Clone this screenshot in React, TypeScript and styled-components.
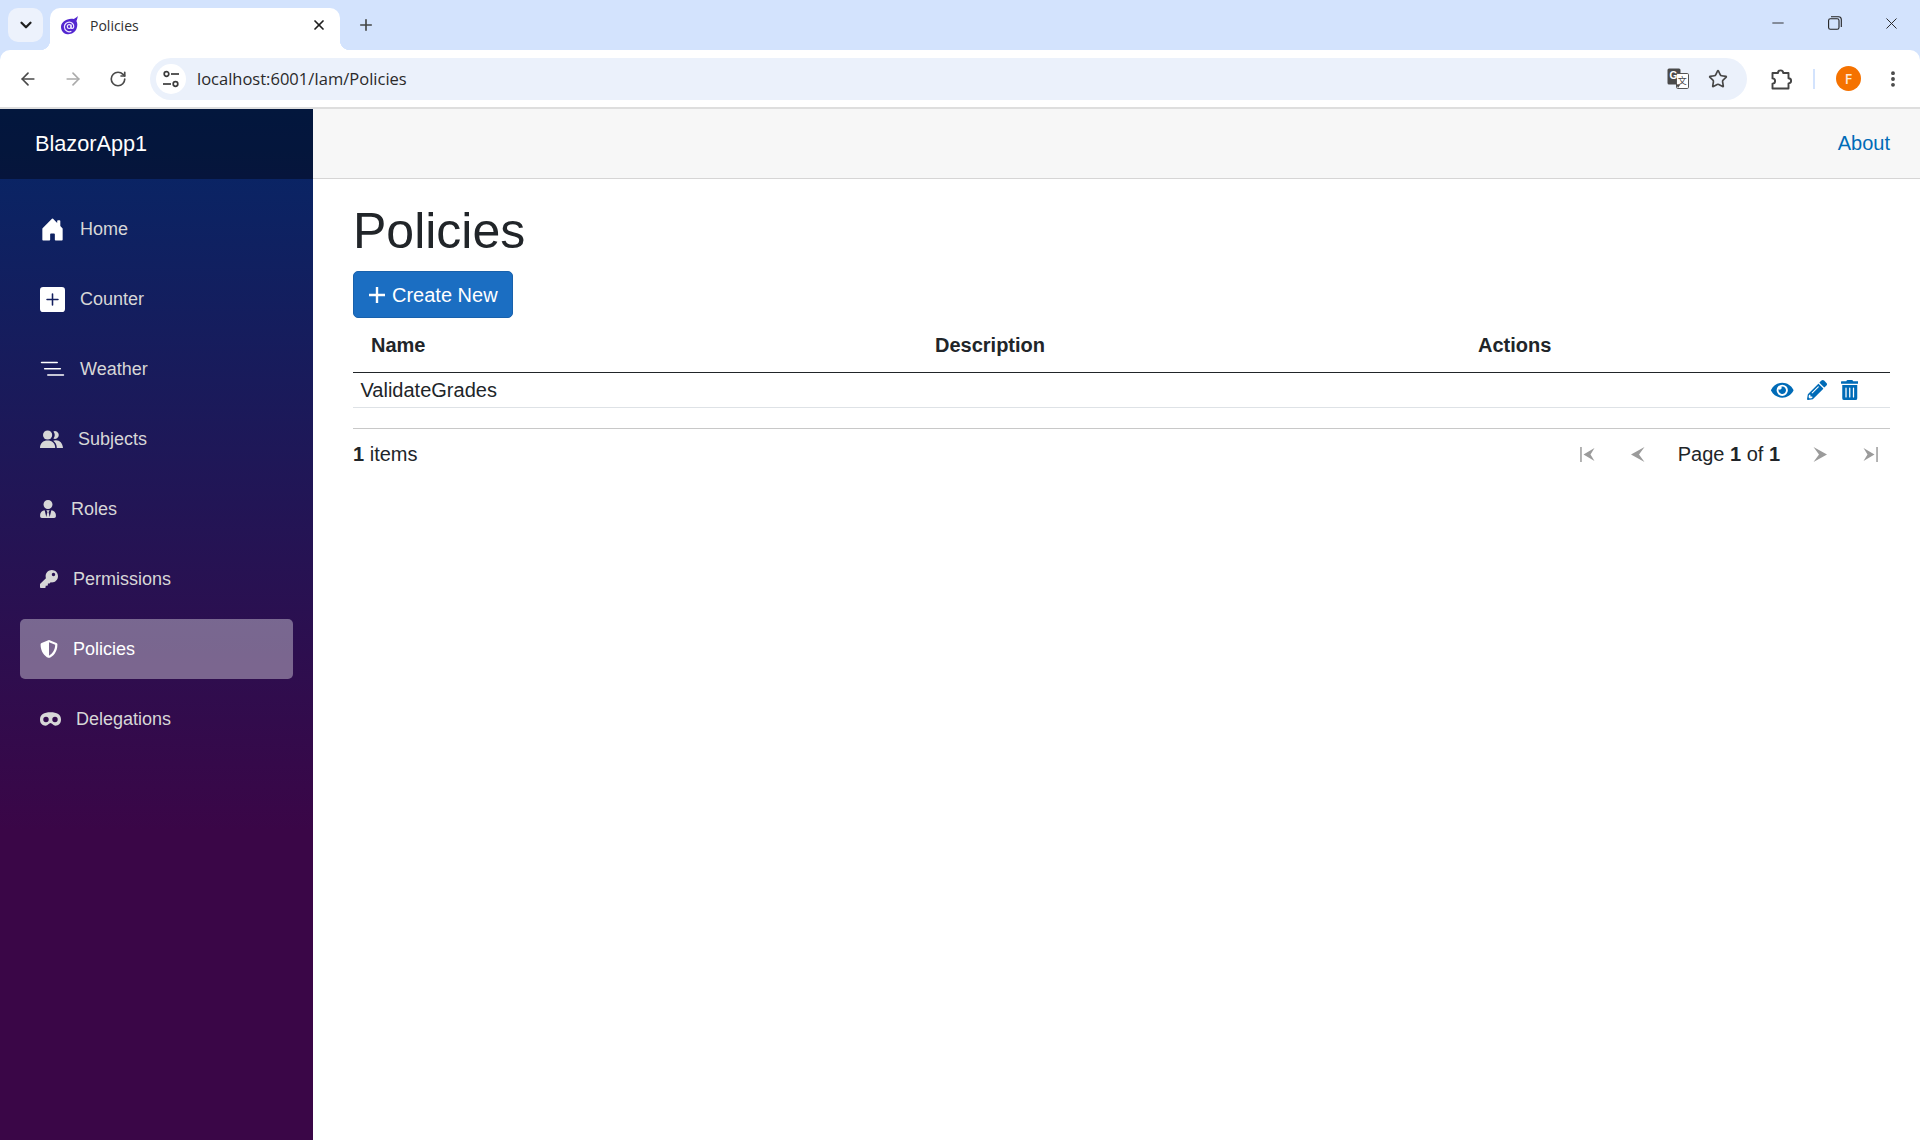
import React from 'react';
import styled, {createGlobalStyle} from 'styled-components';
import {ArrowLeft, ArrowRight, ChevronDown, EllipsisVertical, Minus, Plus, RotateCw, Star, X} from 'lucide-react';
import {BsHouseDoorFill, BsListNested, BsPlusSquareFill} from 'react-icons/bs';
import {FaEye, FaKey, FaPencilAlt, FaShieldAlt, FaTrashAlt, FaUserTie} from 'react-icons/fa';

const GlobalStyle = createGlobalStyle`
html, body {
    margin: 0;
    padding: 0;
    background: white;
    font-family: "Liberation Sans", Arial, sans-serif;
}
* {
    box-sizing: border-box;
}
`;

const Page = styled.div`
width: 1920px;
height: 1140px;
display: flex;
flex-direction: column;
overflow: hidden;
`;

/* browser frame */

const BrowserFrame = styled.div`
flex: none;
background-color: #d3e3fd;
`;

const TabStrip = styled.div`
height: 50px;
display: flex;
align-items: flex-start;
padding: 8px 0 0 8px;
`;

const TabListButton = styled.div`
width: 35px;
height: 34px;
margin-right: 7px;
border-radius: 10px;
background-color: #edf2fc;
color: #1f1f1f;
display: flex;
align-items: center;
justify-content: center;
`;

const Tab = styled.div`
position: relative;
width: 290px;
height: 42px;
padding: 0 13px 8px 10px;
background-color: white;
border-radius: 10px 10px 0 0;
display: flex;
align-items: center;
color: #1f1f1f;

&::before, &::after {
    content: '';
    position: absolute;
    bottom: 0;
    width: 10px;
    height: 10px;
}
&::before {
    left: -10px;
    background: radial-gradient(circle at 0 0, transparent 10px, white 10.5px);
}
&::after {
    right: -10px;
    background: radial-gradient(circle at 100% 0, transparent 10px, white 10.5px);
}
`;

const TabTitle = styled.span`
flex: 1;
margin-left: 11px;
font-family: "Open Sans", sans-serif;
font-size: 14px;
color: #303030;
`;

const NewTab = styled.div`
margin-left: 17px;
height: 34px;
color: #444746;
display: flex;
align-items: center;
`;

const WindowControls = styled.div`
margin-left: auto;
height: 30px;
display: flex;
align-items: center;
color: #222;
`;

const WindowButton = styled.div`
width: 57px;
display: flex;
justify-content: center;
`;

const Toolbar = styled.div`
height: 59px;
background-color: white;
border-bottom: 2px solid #dedede;
border-radius: 10px 10px 0 0;
display: flex;
align-items: center;
padding-left: 5px;
`;

const ToolbarButton = styled.div<{$dim?: boolean}>`
width: 45px;
display: flex;
justify-content: center;
color: ${(props) => props.$dim ? '#ababab' : '#4a4a4a'};
`;

const Omnibox = styled.div`
flex: 1;
height: 42px;
margin-left: 10px;
padding: 0 19px 0 6px;
border-radius: 21px;
background-color: #ebf1fb;
display: flex;
align-items: center;
`;

const SiteInfo = styled.div`
width: 30px;
height: 30px;
border-radius: 50%;
background-color: white;
display: flex;
align-items: center;
justify-content: center;
`;

const Url = styled.span`
flex: 1;
margin-left: 11px;
font-family: "Open Sans", sans-serif;
font-size: 16.5px;
color: #2a2a2a;
`;

const OmniIcons = styled.div`
display: flex;
align-items: center;
gap: 19px;
color: #474747;
`;

const ToolbarEnd = styled.div`
width: 173px;
padding-left: 24px;
display: flex;
align-items: center;
color: #444;
`;

const Divider = styled.div`
width: 2px;
height: 20px;
margin: 0 21px;
background-color: #d3e3fd;
`;

const Avatar = styled.div`
width: 25px;
height: 25px;
border-radius: 50%;
background-color: #f57200;
color: #ffe9d6;
font-family: "Open Sans", sans-serif;
font-size: 14px;
font-weight: 600;
display: flex;
align-items: center;
justify-content: center;
`;

const MenuDots = styled.div`
margin-left: 22px;
display: flex;
`;

/* app */

const AppBody = styled.div`
flex: 1;
display: flex;
min-height: 0;
`;

const Sidebar = styled.aside`
width: 313px;
flex: none;
background-image: linear-gradient(180deg, rgb(5, 39, 103) 0%, #3a0647 70%);
`;

const Brand = styled.div`
height: 70px;
padding-left: 35px;
background-color: rgba(0, 0, 0, 0.4);
color: white;
font-size: 21.7px;
display: flex;
align-items: center;
`;

const NavList = styled.nav`
padding: 15px 20px;
display: flex;
flex-direction: column;
`;

const NavLink = styled.a<{$active?: boolean}>`
height: 60px;
margin: 5px 0;
padding-left: 20px;
border-radius: 5px;
display: flex;
align-items: center;
gap: 15px;
font-size: 18px;
color: ${(props) => props.$active ? 'white' : '#d7d7d7'};
background-color: ${(props) => props.$active ? 'rgba(255, 255, 255, 0.37)' : 'transparent'};
`;

const BoxIcon = styled.span`
width: 25px;
height: 25px;
color: white;
display: flex;
align-items: center;
justify-content: center;
`;

// font-awesome glyphs are not square, the box keeps each one at its own width
const Glyph = styled.span<{$width: number}>`
width: ${(props) => props.$width}px;
flex: none;
display: flex;
align-items: center;
justify-content: center;
`;

const Main = styled.main`
flex: 1;
min-width: 0;
display: flex;
flex-direction: column;
`;

const TopRow = styled.div`
height: 70px;
padding: 0 30px;
background-color: #f7f7f7;
border-bottom: 1px solid #d6d5d5;
display: flex;
align-items: center;
justify-content: flex-end;
`;

const AboutLink = styled.a`
font-size: 20px;
color: #006bb7;
`;

const Content = styled.div`
padding: 22px 30px 0 40px;
color: #212529;
font-size: 20px;
`;

const Title = styled.h1`
margin: 0 0 10px;
font-size: 50px;
font-weight: 400;
line-height: 60px;
`;

const CreateButton = styled.button`
width: 160px;
height: 47px;
padding: 1px 0 0 15px;
border: 1px solid #1861ac;
border-radius: 5px;
background-color: #1b6ec2;
color: white;
font-family: inherit;
font-size: 20px;
display: flex;
align-items: center;
gap: 7px;
`;

const GridRow = styled.div`
display: grid;
grid-template-columns: 564px 543px 1fr;
align-items: center;
`;

const HeaderRow = styled(GridRow)`
height: 55px;
border-bottom: 1px solid #212529;
`;

const HeaderCell = styled.div`
padding-left: 18px;
font-weight: 700;
`;

const BodyRow = styled(GridRow)`
height: 35px;
border-bottom: 1px solid #dee2e6;
`;

const BodyCell = styled.div`
padding-left: 7.5px;
`;

const ActionsCell = styled.div`
padding-right: 32px;
display: flex;
justify-content: flex-end;
align-items: center;
gap: 13.5px;
color: #006bb7;
`;

const Footer = styled.div`
margin-top: 20px;
padding-top: 10px;
border-top: 1px solid #c8c8c8;
display: flex;
justify-content: space-between;
align-items: center;
line-height: 30px;
`;

const Pager = styled.div`
display: flex;
align-items: center;
`;

const PagerButton = styled.div<{$after?: boolean}>`
width: 40px;
height: 30px;
margin-left: ${(props) => props.$after ? '10px' : '0'};
display: flex;
align-items: center;
justify-content: center;
`;

const PageText = styled.div`
margin: 0 20px;
`;

const TuneIcon = () => (
    <svg width="16" height="18" viewBox="0 0 16 18" fill="none" stroke="#3c3c3c" strokeWidth="1.7">
        <circle cx="3.5" cy="4" r="2.3"/>
        <path d="M8 4h8"/>
        <circle cx="12.5" cy="14" r="2.3"/>
        <path d="M0 14h8"/>
    </svg>
);

const TranslateIcon = () => (
    <svg width="22" height="21" viewBox="0 0 22 21">
        <rect x="0.5" y="0.5" width="13" height="16" rx="1.5" fill="#4a4a4a"/>
        <rect x="9.5" y="5.5" width="12" height="15" rx="1.2" fill="white" stroke="#555"/>
        <path d="M9 16l2 4 2-3z" fill="#4a4a4a"/>
        <text x="2.5" y="11" fontSize="10" fontWeight="700" fill="white" fontFamily="Liberation Sans, sans-serif">G</text>
        <text x="10.8" y="16" fontSize="9" fill="#444" fontFamily="Noto Sans CJK SC, sans-serif">文</text>
    </svg>
);

const PuzzleIcon = () => (
    <svg width="21" height="22" viewBox="0 0 21 22" fill="none" stroke="#444" strokeWidth="1.9" strokeLinejoin="round">
        <path d="M1.5 5H7a2.6 2.6 0 0 1 5.2 0h5.3v5.2a2.6 2.6 0 0 1 0 5.2V20.5H1.5V15.6a2.6 2.6 0 0 0 0-5.2Z"/>
    </svg>
);

const RestoreIcon = () => (
    <svg width="14" height="14" viewBox="0 0 14 14" fill="none" stroke="#222" strokeWidth="1.1">
        <rect x="0.6" y="2.8" width="10.4" height="10.4" rx="1.8"/>
        <path d="M3 .7h7.5a2.8 2.8 0 0 1 2.8 2.8V11"/>
    </svg>
);

const BlazorIcon = () => (
    <svg width="19" height="19" viewBox="0 0 19 19" fill="none">
        <path d="M7.5 3.4C10 2.4 12.4 2.6 13.6 3 15 2.6 16.6 1.4 17.8 0 17.6 2 17 3.6 16.4 5 17.6 7 17.6 10 16.6 12.6 15 17 10.8 18.6 7.4 18.2 3.4 17.8 1 14.6 1 11 1 7.4 3.6 4.8 7.5 3.4Z" fill="#5327d0"/>
        <circle cx="9.2" cy="10.6" r="1.9" stroke="#efe8ff" strokeWidth="1.2"/>
        <path d="M11.1 8.6v2.8c0 1.4 2.3 1.4 2.6-.6.3-2.6-1.9-4.7-4.4-4.7a4.9 4.9 0 0 0-4.9 4.9 4.9 4.9 0 0 0 7 4.3" stroke="#efe8ff" strokeWidth="1.2"/>
    </svg>
);

const SubjectsIcon = () => (
    <svg width="23" height="18" viewBox="0 0 23 18" fill="currentColor">
        <circle cx="7.6" cy="5" r="4.6"/>
        <path d="M13.4 1.4a3.9 3.9 0 1 1 0 7.2 6 6 0 0 0 0-7.2z"/>
        <path d="M0 18c0-4.8 3.200-7.400 7.600-7.400S15.200 13.200 15.200 18z"/>
        <path d="M13.200 10.800c.7-.3 1.700-.5 2.700-.5 4 0 6.700 3 7.100 7.700h-6.200c0-3-1.300-5.500-3.600-7.200z"/>
    </svg>
);

const MaskIcon = () => (
    <svg width="21" height="14" viewBox="0 0 21 14" fill="currentColor" fillRule="evenodd">
        <path d="M10.500.300C17 .300 21 2.500 21 7.500 21 11.500 18.500 13.700 15.500 13.700 13 13.700 12 11 10.500 11 9 11 8 13.700 5.500 13.700 2.500 13.700 0 11.500 0 7.500 0 2.500 4 .300 10.500.300ZM6 4.800a2.700 2.700 0 1 0 0 5.400 2.700 2.700 0 0 0 0-5.400ZM15 4.800a2.700 2.700 0 1 0 0 5.400 2.700 2.700 0 0 0 0-5.400Z"/>
    </svg>
);

const PagerFirstIcon = () => (
    <svg width="15" height="15" viewBox="0 0 15 15" fill="#9b9b9b">
        <rect x="0" y="0" width="1.900" height="15" fill="#b0b0b0"/>
        <path d="M14.500 1 3.500 7.500l11 6.500-4-6.500z"/>
    </svg>
);

const PagerLastIcon = () => (
    <svg width="15" height="15" viewBox="0 0 15 15" fill="#9b9b9b">
        <rect x="13.100" y="0" width="1.900" height="15" fill="#b0b0b0"/>
        <path d="M.5 1 11.500 7.500l-11 6.500 4-6.500z"/>
    </svg>
);

const PagerPrevIcon = () => (
    <svg width="15" height="15" viewBox="0 0 15 15" fill="#9b9b9b">
        <path d="M14.500 0 1 7.500 14.500 15 9 7.500z"/>
    </svg>
);

const PagerNextIcon = () => (
    <svg width="15" height="15" viewBox="0 0 15 15" fill="#9b9b9b">
        <path d="M.5 0 14 7.500 .5 15 6 7.500z"/>
    </svg>
);

const App = () => {
    return (
        <Page>
            <GlobalStyle/>
            <BrowserFrame>
                <TabStrip>
                    <TabListButton><ChevronDown size={18} strokeWidth={3}/></TabListButton>
                    <Tab>
                        <BlazorIcon/>
                        <TabTitle>Policies</TabTitle>
                        <X size={16} strokeWidth={2.6}/>
                    </Tab>
                    <NewTab><Plus size={18} strokeWidth={2.2}/></NewTab>
                    <WindowControls>
                        <WindowButton><Minus size={18} strokeWidth={1.2}/></WindowButton>
                        <WindowButton><RestoreIcon/></WindowButton>
                        <WindowButton><X size={19} strokeWidth={1.2}/></WindowButton>
                    </WindowControls>
                </TabStrip>
                <Toolbar>
                    <ToolbarButton><ArrowLeft size={20} strokeWidth={2}/></ToolbarButton>
                    <ToolbarButton $dim><ArrowRight size={20} strokeWidth={2}/></ToolbarButton>
                    <ToolbarButton><RotateCw size={18} strokeWidth={2.2}/></ToolbarButton>
                    <Omnibox>
                        <SiteInfo><TuneIcon/></SiteInfo>
                        <Url>localhost:6001/Iam/Policies</Url>
                        <OmniIcons>
                            <TranslateIcon/>
                            <Star size={20} strokeWidth={2}/>
                        </OmniIcons>
                    </Omnibox>
                    <ToolbarEnd>
                        <PuzzleIcon/>
                        <Divider/>
                        <Avatar>F</Avatar>
                        <MenuDots><EllipsisVertical size={20} strokeWidth={2.6}/></MenuDots>
                    </ToolbarEnd>
                </Toolbar>
            </BrowserFrame>
            <AppBody>
                <Sidebar>
                    <Brand>BlazorApp1</Brand>
                    <NavList>
                        <NavLink><BoxIcon><BsHouseDoorFill size={25}/></BoxIcon>Home</NavLink>
                        <NavLink><BoxIcon><BsPlusSquareFill size={25}/></BoxIcon>Counter</NavLink>
                        <NavLink><BoxIcon><BsListNested size={25}/></BoxIcon>Weather</NavLink>
                        <NavLink><SubjectsIcon/>Subjects</NavLink>
                        <NavLink><Glyph $width={16}><FaUserTie size={18}/></Glyph>Roles</NavLink>
                        <NavLink><Glyph $width={18}><FaKey size={18}/></Glyph>Permissions</NavLink>
                        <NavLink $active><Glyph $width={18}><FaShieldAlt size={18}/></Glyph>Policies</NavLink>
                        <NavLink><MaskIcon/>Delegations</NavLink>
                    </NavList>
                </Sidebar>
                <Main>
                    <TopRow>
                        <AboutLink>About</AboutLink>
                    </TopRow>
                    <Content>
                        <Title>Policies</Title>
                        <CreateButton>
                            <svg width="16" height="16" viewBox="0 0 16 16" fill="white">
                                <path d="M6.8 0h2.4v6.8H16v2.4H9.2V16H6.8V9.2H0V6.8h6.8z"/>
                            </svg>
                            Create New
                        </CreateButton>
                        <HeaderRow>
                            <HeaderCell>Name</HeaderCell>
                            <HeaderCell>Description</HeaderCell>
                            <HeaderCell>Actions</HeaderCell>
                        </HeaderRow>
                        <BodyRow>
                            <BodyCell>ValidateGrades</BodyCell>
                            <BodyCell/>
                            <ActionsCell>
                                <Glyph $width={22.5}><FaEye size={22.5}/></Glyph>
                                <Glyph $width={20}><FaPencilAlt size={20}/></Glyph>
                                <Glyph $width={17.5}><FaTrashAlt size={20}/></Glyph>
                            </ActionsCell>
                        </BodyRow>
                        <Footer>
                            <div><strong>1</strong> items</div>
                            <Pager>
                                <PagerButton><PagerFirstIcon/></PagerButton>
                                <PagerButton $after><PagerPrevIcon/></PagerButton>
                                <PageText>Page <strong>1</strong> of <strong>1</strong></PageText>
                                <PagerButton><PagerNextIcon/></PagerButton>
                                <PagerButton $after><PagerLastIcon/></PagerButton>
                            </Pager>
                        </Footer>
                    </Content>
                </Main>
            </AppBody>
        </Page>
    );
};

export default App;
